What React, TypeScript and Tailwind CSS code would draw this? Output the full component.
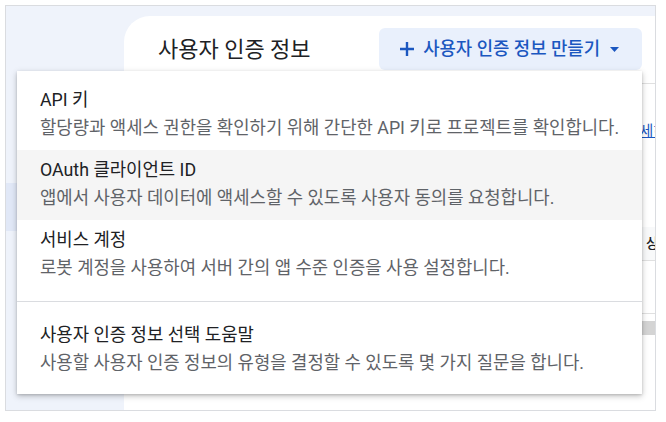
import React from 'react';

const font = { fontFamily: "Roboto, 'Noto Sans CJK KR', sans-serif" };

type Option = { title: string; desc: string; active?: boolean };

const options: Option[] = [
  { title: 'API 키', desc: '할당량과 액세스 권한을 확인하기 위해 간단한 API 키로 프로젝트를 확인합니다.' },
  { title: 'OAuth 클라이언트 ID', desc: '앱에서 사용자 데이터에 액세스할 수 있도록 사용자 동의를 요청합니다.', active: true },
  { title: '서비스 계정', desc: '로봇 계정을 사용하여 서버 간의 앱 수준 인증을 사용 설정합니다.' },
];

const MenuItem = ({ title, desc, active }: Option) => (
  <div className={`flex flex-col gap-1 pl-[23px] pr-4 pt-2 pb-[10px] ${active ? 'bg-[#f5f5f5]' : ''}`}>
    <div className="text-[17.8px] leading-6 text-[#202124]">{title}</div>
    <div className="text-[17.8px] leading-6 text-[#5f6368] whitespace-nowrap">{desc}</div>
  </div>
);

const Sidebar = () => (
  <aside className="w-[118px] shrink-0 bg-[#eff3fb] pt-[177px]">
    <div className="h-[48px] bg-[#e1e8f7]" />
  </aside>
);

const CredentialsCard = () => (
  <section className="flex-1 min-w-0 mt-[10px] bg-white rounded-tl-[26px] overflow-hidden">
    <header className="flex items-center justify-between pl-[34px] pr-[13px] pt-3 pb-[13px] border-b border-[#e0e0e0]">
      <h1 className="text-[22px] text-[#202124]">사용자 인증 정보</h1>
      <button className="h-[42px] flex items-center gap-[9px] pl-[21px] pr-[23px] rounded-md bg-[#e9f0fc] text-[#1b57c0] text-[17.8px] font-medium">
        <svg width="14" height="14" viewBox="0 0 14 14">
          <path d="M7 0v14M0 7h14" stroke="currentColor" strokeWidth="2.4" />
        </svg>
        <span>사용자 인증 정보 만들기</span>
        <svg width="9" height="5" viewBox="0 0 9 5" className="ml-[1px]">
          <path d="M0 0h9L4.5 5z" fill="currentColor" />
        </svg>
      </button>
    </header>
    <div className="flex justify-end pt-[36px] -mr-[12px]">
      <span className="text-[15px] text-[#1a57c0] underline whitespace-nowrap">자세히</span>
    </div>
    <div className="mt-[84px] h-[34px] bg-[#f8f9fa] border-b border-[#e0e0e0] flex items-center justify-end -mr-[4px]">
      <span className="text-[14px] text-[#202124] font-medium">상</span>
    </div>
    <div className="mt-[52px] border-t border-[#e0e0e0]" />
    <div className="mt-[7px] h-[14px] bg-[#d4d4d4]" />
  </section>
);

export default function App() {
  return (
    <div className="w-[666px] h-[422px] bg-white p-[5px] pr-[10px] pb-[11px]" style={font}>
      <div className="relative w-full h-full border border-[#dadce0] bg-[#eff3fb] flex">
        <Sidebar />
        <CredentialsCard />
        <div className="absolute left-[11px] top-[65px] w-[625px] bg-white pt-[9px] pb-[9px] shadow-[0_2px_6px_rgba(0,0,0,0.25),0_1px_2px_rgba(0,0,0,0.12)]">
          {options.map(o => (
            <MenuItem key={o.title} {...o} />
          ))}
          <div className="mt-[11px] mb-[13px] border-t border-[#dadce0]" />
          <MenuItem
            title="사용자 인증 정보 선택 도움말"
            desc="사용할 사용자 인증 정보의 유형을 결정할 수 있도록 몇 가지 질문을 합니다."
          />
        </div>
      </div>
    </div>
  );
}
